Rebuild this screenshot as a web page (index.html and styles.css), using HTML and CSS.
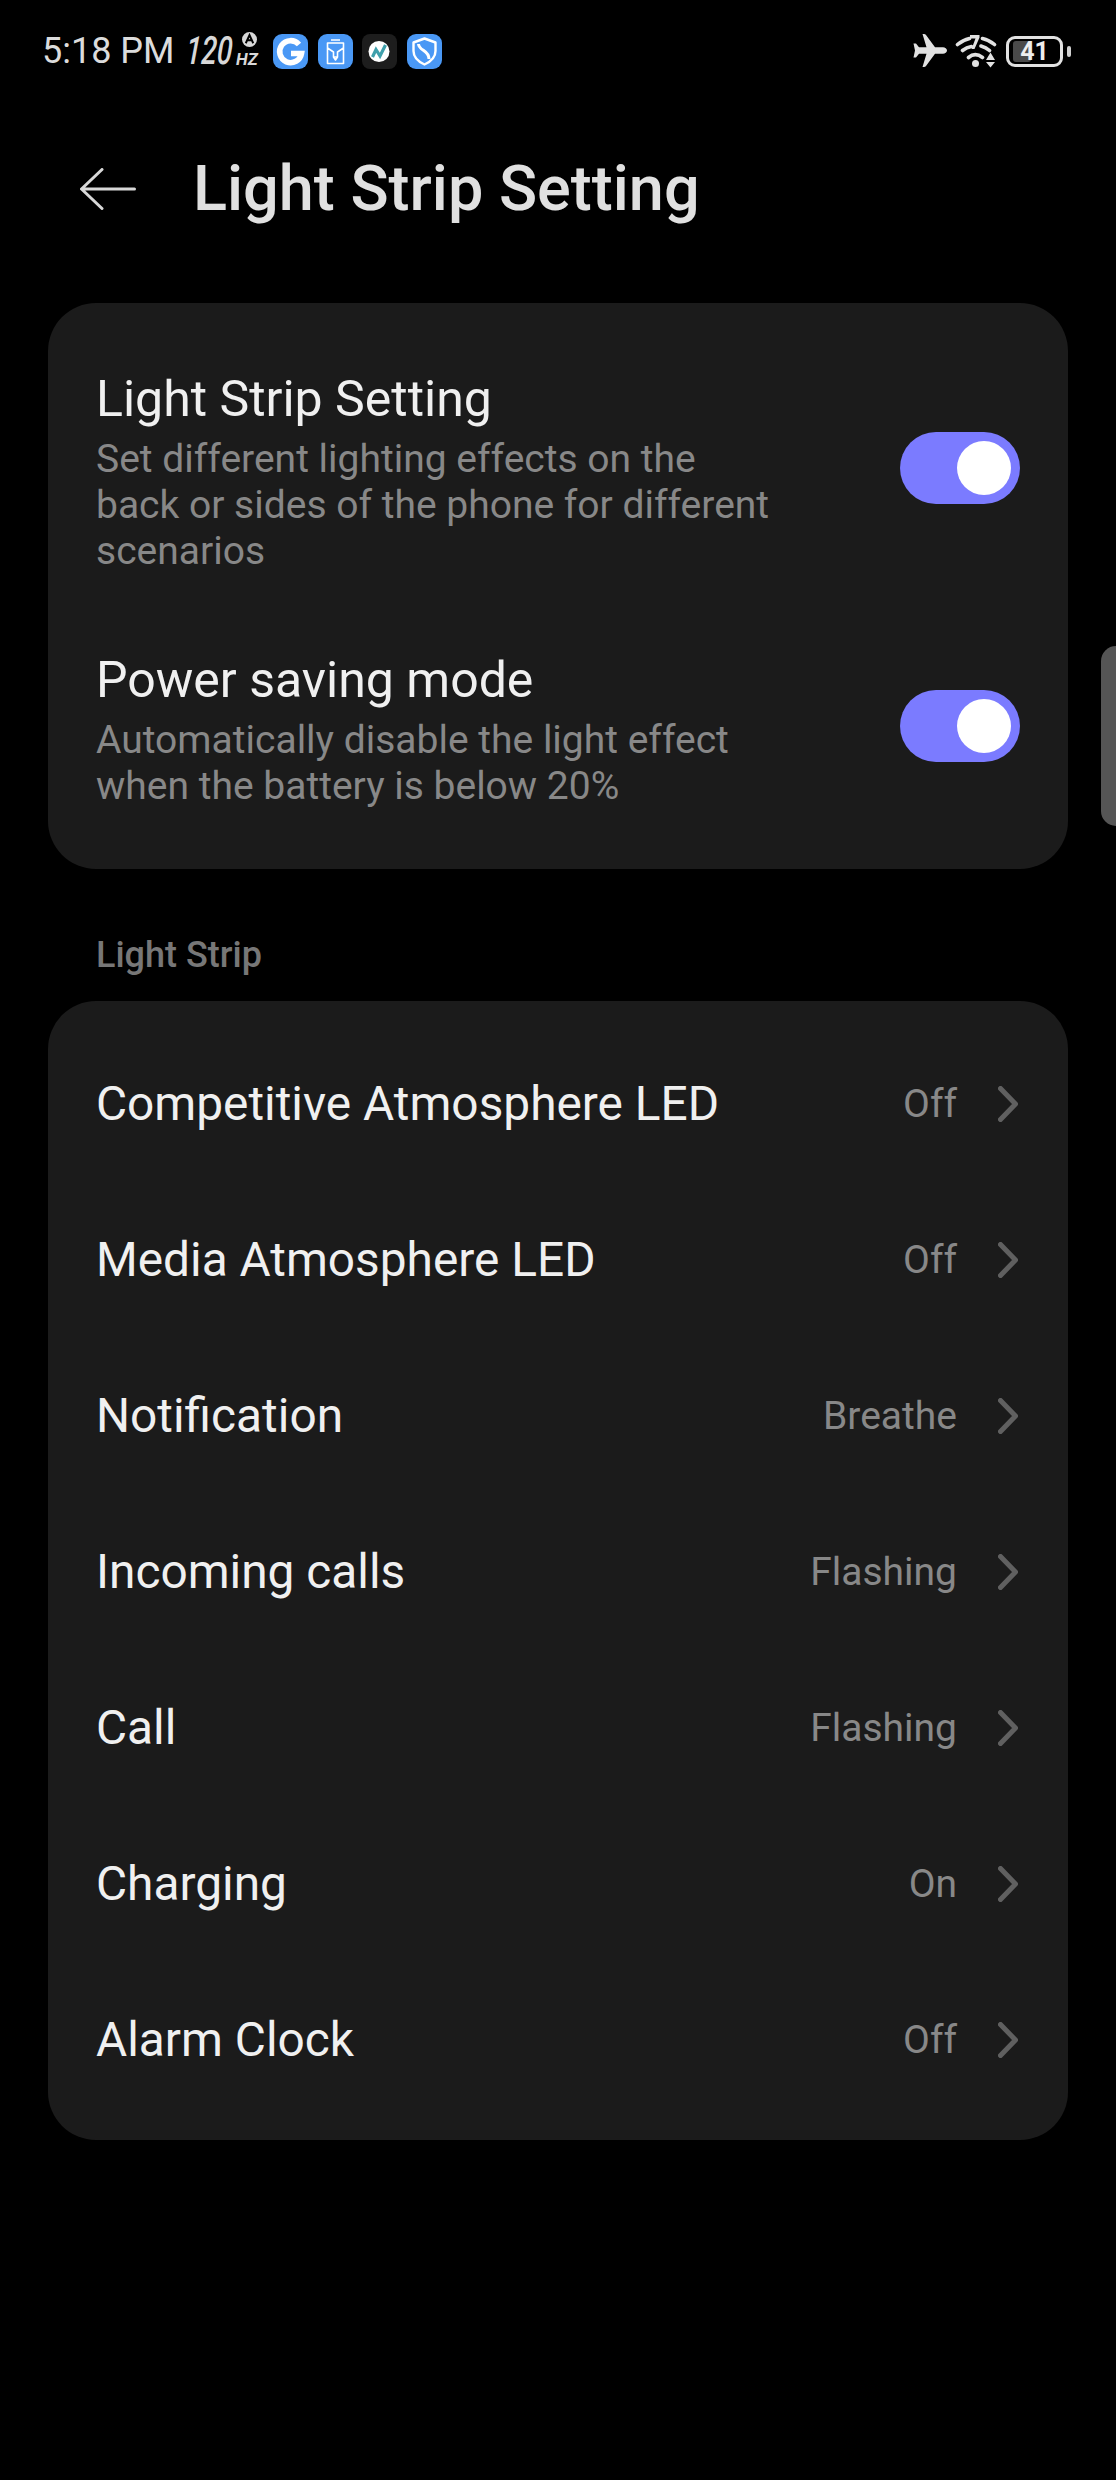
FILE: index.html
```html
<!DOCTYPE html>
<html lang="en">
<head>
<meta charset="utf-8">
<title>Light Strip Setting</title>
<link rel="stylesheet" href="styles.css">
</head>
<body>
<div class="screen">
  <div class="status">
    <span class="time">5:18 PM</span>
    <span class="hz"><span class="hz-num">120</span><span class="hz-unit">HZ</span>
      <svg class="hz-a" viewBox="0 0 20 20"><circle cx="10" cy="10" r="10" fill="#d8d8d8"/><path d="M5 15 10 4l5 11M7 11h6" fill="none" stroke="#000" stroke-width="2.6"/></svg>
    </span>
    <svg class="app" viewBox="0 0 35 35"><rect width="35" height="35" rx="9" fill="#4a98f5"/><path d="M26 10.500A11 11 0 1 0 28.500 19.500H18" fill="none" stroke="#fff" stroke-width="5.600"/></svg>
    <svg class="app" viewBox="0 0 35 35"><rect width="35" height="35" rx="9" fill="#4a98f5"/><path d="M13 6h9M9.500 9h16v20.500h-16zM9.500 14l6 4v5l2 3 2-3v-5l6-4M15.500 23h4" fill="none" stroke="#fff" stroke-width="1.600" stroke-linejoin="round"/></svg>
    <svg class="app" viewBox="0 0 35 35"><rect width="35" height="35" rx="8" fill="#1d1d1d"/><circle cx="17" cy="17.500" r="10.500" fill="#fff"/><path d="M10.500 23 14 15.500l4 6.500 5.500-11" fill="none" stroke="#3fa0ac" stroke-width="3.200"/></svg>
    <svg class="app" viewBox="0 0 35 35"><rect width="35" height="35" rx="9" fill="#4a98f5"/><path d="M17.500 4.500 28.500 8.500v8.500c0 6.500-4.500 10.500-11 13.500C11 27.500 6.500 23.500 6.500 17V8.500z" fill="none" stroke="#fff" stroke-width="2.400" stroke-linejoin="round"/><path d="M11.500 10C12 17 22 16 22 25" fill="none" stroke="#fff" stroke-width="3"/></svg>
    <span class="spacer"></span>
    <svg class="plane" viewBox="0 0 34 34"><path d="M34 16.500c0-1.800-2-3.200-4-3.200h-8L13 1c-.5-.8-1.500-1-2.500-1h-1l4 13.300H6L3 9.500H.5L2 16.500.5 23.500H3l3-3.700h7.500l-4 13.200h1c1 0 2-.3 2.500-1L22 19.800h8c2 0 4-1.500 4-3.300z" fill="#e2e2e2"/></svg>
    <svg class="wifi" viewBox="0 0 42 33"><g fill="none" stroke="#e2e2e2" stroke-width="3.600" stroke-linecap="round"><path d="M2.500 9.500C6 6.500 10 4.500 14.500 3.500M27.500 3.500C32 4.500 36 6.500 39.500 9.500M7.500 15.500C10 13.500 13 12 16.500 11.500M26 11c3 .8 6 2.200 8.500 4.500M13.500 22.500c4.500-3.800 9-3.800 14 0"/></g><circle cx="20.500" cy="28.500" r="3.500" fill="#e2e2e2"/><path d="M15 0h9.500v2.500L19.500 14h-3L20.500 3.500H15zM35.500 17.500 40 25h-9zM31 27h9l-4.500 5.500z" fill="#e2e2e2"/></svg>
    <span class="battery"><span class="battery-fill"></span><span class="battery-num">41</span></span>
    <span class="battery-nub"></span>
  </div>

  <div class="header">
    <svg class="back" viewBox="0 0 56 42"><path d="M22 1.500 1.500 21 22 40.500M2 21h52.500" fill="none" stroke="#d8d8d8" stroke-width="3" stroke-linecap="round" stroke-linejoin="round"/></svg>
    <h1 class="title">Light Strip Setting</h1>
  </div>

  <section class="card card-toggles">
    <div class="toggle-row">
      <div class="toggle-text">
        <div class="toggle-title">Light Strip Setting</div>
        <div class="row-desc">Set different lighting effects on the back or sides of the phone for different scenarios</div>
      </div>
      <span class="switch"><span class="knob"></span></span>
    </div>
    <div class="toggle-row toggle-row-2">
      <div class="toggle-text">
        <div class="toggle-title">Power saving mode</div>
        <div class="row-desc">Automatically disable the light effect when the battery is below 20%</div>
      </div>
      <span class="switch"><span class="knob"></span></span>
    </div>
  </section>

  <div class="section-label">Light Strip</div>

  <section class="card card-list">
    <div class="list-row"><span class="row-title">Competitive Atmosphere LED</span><span class="value">Off</span><svg class="chev" viewBox="0 0 20 36"><path d="M2.500 2.500 17.500 18 2.500 33.500" /></svg></div>
    <div class="list-row"><span class="row-title">Media Atmosphere LED</span><span class="value">Off</span><svg class="chev" viewBox="0 0 20 36"><path d="M2.500 2.500 17.500 18 2.500 33.500" /></svg></div>
    <div class="list-row"><span class="row-title">Notification</span><span class="value">Breathe</span><svg class="chev" viewBox="0 0 20 36"><path d="M2.500 2.500 17.500 18 2.500 33.500" /></svg></div>
    <div class="list-row"><span class="row-title">Incoming calls</span><span class="value">Flashing</span><svg class="chev" viewBox="0 0 20 36"><path d="M2.500 2.500 17.500 18 2.500 33.500" /></svg></div>
    <div class="list-row"><span class="row-title">Call</span><span class="value">Flashing</span><svg class="chev" viewBox="0 0 20 36"><path d="M2.500 2.500 17.500 18 2.500 33.500" /></svg></div>
    <div class="list-row"><span class="row-title">Charging</span><span class="value">On</span><svg class="chev" viewBox="0 0 20 36"><path d="M2.500 2.500 17.500 18 2.500 33.500" /></svg></div>
    <div class="list-row"><span class="row-title">Alarm Clock</span><span class="value">Off</span><svg class="chev" viewBox="0 0 20 36"><path d="M2.500 2.500 17.500 18 2.500 33.500" /></svg></div>
  </section>

  <div class="side-tab"></div>
</div>
</body>
</html>
```
FILE: styles.css
```css
* { box-sizing: border-box; }
html, body { margin: 0; padding: 0; background: #000; }
body { font-family: Roboto, "Noto Sans", sans-serif; color: #e8e8e8; }
.screen { position: relative; width: 1116px; height: 2480px; background: #000; overflow: hidden; }

.status { display: flex; align-items: center; height: 34px; margin-top: 34px; padding-left: 42px; padding-right: 45px; }
.time { font-size: 36px; line-height: 34px; color: #dcdcdc; width: 143px; white-space: nowrap; }
.hz { position: relative; display: block; width: 88px; height: 34px; color: #d8d8d8; font-style: italic; white-space: nowrap; }
.hz-num { position: absolute; left: 1px; top: 0; font-size: 39px; line-height: 34px; font-weight: 500; transform: scaleX(0.72) skewX(-5deg); transform-origin: left center; }
.hz-unit { position: absolute; left: 51px; top: 15px; font-size: 17px; line-height: 20px; font-weight: 700; }
.hz-a { position: absolute; left: 57px; top: -2px; width: 15px; height: 15px; }
.app { width: 35px; height: 35px; margin-right: 9.500px; flex: none; }
.spacer { flex: 1; }
.plane { width: 34px; height: 34px; margin-right: 8px; flex: none; }
.wifi { width: 42px; height: 33px; margin-right: 9px; flex: none; }
.battery { position: relative; display: flex; align-items: center; justify-content: center; width: 57px; height: 31px; border: 3px solid #e2e2e2; border-radius: 9px; flex: none; }
.battery-fill { position: absolute; left: 4px; top: 2px; bottom: 2px; width: 18px; background: #4a4a4a; border-radius: 3px; }
.battery-num { position: relative; font-size: 25px; line-height: 25px; font-weight: 700; color: #eee; }
.battery-nub { width: 4px; height: 11px; margin-left: 4px; background: #d0d0d0; border-radius: 2px; flex: none; }

.header { display: flex; align-items: center; height: 60px; margin-top: 91px; padding-left: 80px; }
.back { width: 56px; height: 42px; flex: none; margin-right: 57px; }
.title { margin: 0; font-size: 63px; line-height: 60px; font-weight: 500; color: #e0e0e0; white-space: nowrap; }

.card { background: #1b1b1b; margin: 0 48px; border-radius: 48px; }
.card-toggles { height: 566px; margin-top: 84px; padding: 66px 48px 0; }
.toggle-row { display: flex; align-items: center; justify-content: space-between; }
.toggle-row-2 { margin-top: 76px; }
.toggle-text { width: 680px; }
.toggle-title { font-size: 50px; line-height: 60px; margin-bottom: 7px; color: #f0f0f0; white-space: nowrap; }
.row-title { font-size: 47.800px; line-height: 56px; color: #f0f0f0; white-space: nowrap; }
.row-desc { font-size: 39px; line-height: 46px; color: #888; }
.switch { position: relative; display: block; width: 120px; height: 72px; margin-bottom: 7px; border-radius: 36px; background: #7b7bff; flex: none; }
.knob { position: absolute; right: 9px; top: 9px; width: 54px; height: 54px; border-radius: 50%; background: #fff; }

.section-label { font-size: 36px; line-height: 40px; font-weight: 500; color: #777; margin: 66px 0 0 96px; }
.card-list { margin-top: 26px; height: 1139px; padding: 25px 48px 0; }
.list-row { display: flex; align-items: center; height: 156px; }
.list-row .row-title { flex: 1; }
.value { font-size: 39px; line-height: 46px; color: #888; white-space: nowrap; }
.chev { width: 20px; height: 36px; margin-left: 41px; margin-right: 2px; flex: none; }
.chev path { fill: none; stroke: #606060; stroke-width: 5px; stroke-linecap: round; stroke-linejoin: round; }

.side-tab { position: absolute; right: 0; top: 646px; width: 15px; height: 180px; background: #555; border-radius: 20px 0 0 20px; }
```
